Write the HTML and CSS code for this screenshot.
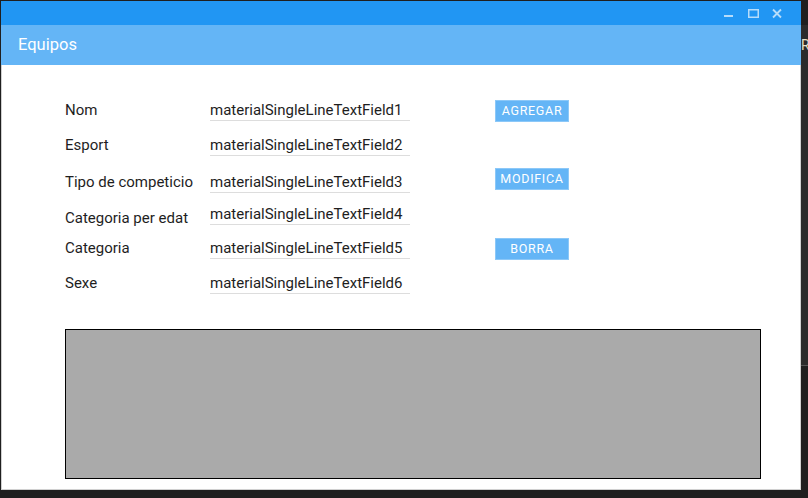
FILE: index.html
```html
<!DOCTYPE html>
<html>
<head>
<meta charset="utf-8">
<link rel="stylesheet" href="styles.css">
</head>
<body>
<div class="backdrop">
  <div class="window">
    <div class="titlebar">
      <svg class="ctrl" width="70" height="24" viewBox="0 0 70 24">
        <rect x="8" y="14" width="9" height="2" fill="#b6dcfa"/>
        <rect x="32.75" y="8.75" width="9.5" height="7.5" fill="none" stroke="#b6dcfa" stroke-width="1.5"/>
        <path d="M57 8.5 L65 16.5 M65 8.5 L57 16.5" stroke="#b6dcfa" stroke-width="1.8"/>
      </svg>
    </div>
    <div class="header">Equipos</div>
    <div class="content">
      <div class="form">
        <div class="row r1">
          <div class="label">Nom</div>
          <div class="field">materialSingleLineTextField1</div>
          <div class="btn">AGREGAR</div>
        </div>
        <div class="row r2">
          <div class="label">Esport</div>
          <div class="field">materialSingleLineTextField2</div>
        </div>
        <div class="row r3">
          <div class="label">Tipo de competicio</div>
          <div class="field">materialSingleLineTextField3</div>
          <div class="btn btn-up">MODIFICA</div>
        </div>
        <div class="row r4">
          <div class="label label-low">Categoria per edat</div>
          <div class="field">materialSingleLineTextField4</div>
        </div>
        <div class="row r5">
          <div class="label">Categoria</div>
          <div class="field">materialSingleLineTextField5</div>
          <div class="btn">BORRA</div>
        </div>
        <div class="row r6">
          <div class="label">Sexe</div>
          <div class="field">materialSingleLineTextField6</div>
        </div>
      </div>
      <div class="grid-box"></div>
    </div>
  </div>
  <div class="side">
    <div class="side-top"></div>
    <div class="side-app"><span class="side-r">R</span></div>
  </div>
</div>
</body>
</html>
```
FILE: styles.css
```css
html, body {
  margin: 0;
  padding: 0;
  background: #1f1f1f;
  width: 808px;
  height: 498px;
  overflow: hidden;
  font-family: Roboto, "Liberation Sans", sans-serif;
}
.backdrop {
  display: flex;
  align-items: flex-start;
  padding-top: 1px;
  padding-left: 1px;
}
.window {
  width: 800px;
  flex: none;
}
.titlebar {
  height: 24px;
  background: #2196f3;
  display: flex;
  justify-content: flex-end;
  padding-right: 15px;
}
.ctrl {
  display: block;
}
.header {
  height: 40px;
  background: #64b5f6;
  color: #ffffff;
  font-size: 16.5px;
  line-height: 40px;
  padding-left: 17px;
}
.content {
  background: #ffffff;
  border-left: 1px solid #d0d0d0;
  border-right: 1px solid #d0d0d0;
  border-bottom: 1px solid #d0d0d0;
  box-sizing: border-box;
  height: 425px;
  padding: 35px 0 0 63px;
}
.form {
  display: flex;
  flex-direction: column;
}
.row {
  display: flex;
  align-items: flex-start;
}
.r1 { height: 35px; }
.r2 { height: 37px; }
.r3 { height: 32px; }
.r4 { height: 34px; }
.r5 { height: 35px; }
.r6 { height: 22px; }
.label {
  width: 145px;
  font-size: 15px;
  line-height: 20px;
  color: #1e1e1e;
  white-space: nowrap;
}
.label-low {
  margin-top: 4px;
}
.field {
  width: 200px;
  height: 20px;
  font-size: 15px;
  line-height: 20px;
  color: #1e1e1e;
  border-bottom: 1px solid #dddddd;
}
.btn {
  margin-left: 85px;
  width: 72px;
  height: 20px;
  background: #64b5f6;
  border: 1px solid #8cc8f8;
  color: #ffffff;
  font-size: 12.5px;
  font-weight: 400;
  letter-spacing: 0.7px;
  line-height: 20px;
  text-align: center;
}
.btn-up {
  margin-top: -4px;
}
.grid-box {
  margin-top: 34px;
  width: 694px;
  height: 148px;
  background: #aaaaaa;
  border: 1px solid #000000;
}
.side {
  flex: 1;
  display: flex;
  flex-direction: column;
}
.side-top {
  height: 24px;
}
.side-app {
  height: 340px;
  background: #2b2b2b;
  border-bottom: 1px solid #555;
  position: relative;
  overflow: hidden;
}
.side-r {
  position: absolute;
  left: 0;
  top: 12px;
  color: #e8e0c8;
  font-size: 14px;
}
```
